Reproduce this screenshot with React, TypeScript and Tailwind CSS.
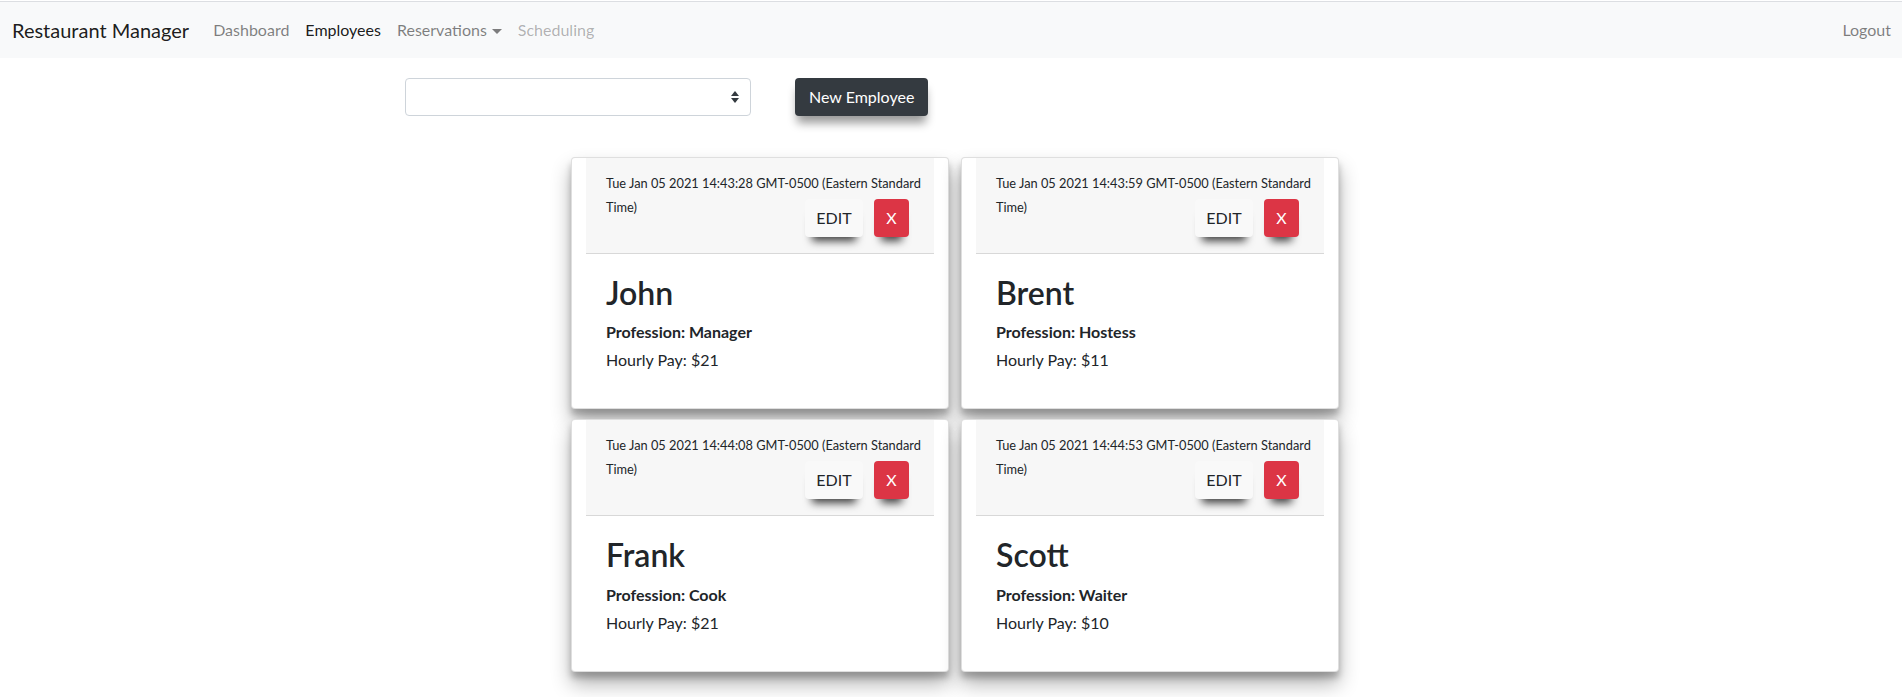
import React from "react";

// ---------- Data ----------
type Employee = {
  created: string;
  name: string;
  profession: string;
  pay: number;
};

const EMPLOYEES: Employee[] = [
  { created: "Tue Jan 05 2021 14:43:28 GMT-0500", name: "John", profession: "Manager", pay: 21 },
  { created: "Tue Jan 05 2021 14:43:59 GMT-0500", name: "Brent", profession: "Hostess", pay: 11 },
  { created: "Tue Jan 05 2021 14:44:08 GMT-0500", name: "Frank", profession: "Cook", pay: 21 },
  { created: "Tue Jan 05 2021 14:44:53 GMT-0500", name: "Scott", profession: "Waiter", pay: 10 },
];

const FONT = "font-['Segoe_UI',Lato,'Liberation_Sans',sans-serif]";

// ---------- UI ----------
export default function App() {
  return (
    <div className={`min-h-screen w-full bg-white text-[#212529] ${FONT}`}>
      <Navbar />

      {/* toolbar */}
      <div className="mt-5 flex items-center pl-[405px]">
        <div className="relative h-[38px] w-[346px] rounded-[4px] border border-[#ced4da] bg-white">
          <svg
            className="absolute right-[11px] top-1/2 -translate-y-1/2"
            width="8"
            height="12"
            viewBox="0 0 8 12"
          >
            <path d="M0 5 L4 0 L8 5 Z" fill="#343a40" />
            <path d="M0 7 L4 12 L8 7 Z" fill="#343a40" />
          </svg>
        </div>
        <button className="ml-[44px] h-[38px] rounded-[4px] bg-[#343a40] px-[14px] text-base text-white shadow-[0_9px_10px_-2px_rgba(0,0,0,0.4)]">
          New Employee
        </button>
      </div>

      {/* cards */}
      <div className="mt-[41px] grid grid-cols-[378px_378px] justify-center gap-x-3 gap-y-[10px] pl-2">
        {EMPLOYEES.map((e) => (
          <EmployeeCard key={e.name} emp={e} />
        ))}
      </div>
    </div>
  );
}

function Navbar() {
  return (
    <nav className="mt-px flex h-[57px] items-center border-t border-[#dcdee2] bg-[#f8f9fa] pl-3 pr-[11px]">
      <span className="mr-4 text-[20px] text-black/90">Restaurant Manager</span>
      <a className="px-2 text-base text-black/50">Dashboard</a>
      <a className="px-2 text-base text-black/90">Employees</a>
      <a className="flex items-center px-2 text-base text-black/50">
        Reservations
        <span className="ml-[5px] mt-[2px] inline-block border-x-[5px] border-t-[5px] border-x-transparent border-t-black/50" />
      </a>
      <a className="px-2 text-base text-black/30">Scheduling</a>
      <a className="ml-auto text-base text-black/50">Logout</a>
    </nav>
  );
}

function EmployeeCard({ emp }: { emp: Employee }) {
  return (
    <div className="rounded-[4px] border border-black/[0.125] bg-white px-[14px] shadow-[0_12px_20px_rgba(0,0,0,0.3),0_6px_6px_rgba(0,0,0,0.22)]">
      {/* header */}
      <div className="border-b border-black/[0.125] bg-[#f7f7f7] pb-4 pl-5 pr-[25px] pt-[13px]">
        <div className="text-[12.8px] leading-6">
          <div className="whitespace-nowrap">{emp.created} (Eastern Standard</div>
          <div>Time)</div>
        </div>
        <div className="-mt-5 flex justify-end gap-[11px]">
          <button className="h-[38px] w-[58px] rounded-[4px] bg-[#f9f9f9] text-base text-[#212529] shadow-[0_11px_8px_-7px_rgba(0,0,0,0.75)]">
            EDIT
          </button>
          <button className="h-[38px] w-[35px] rounded-[4px] bg-[#dc3545] text-base text-white shadow-[0_11px_8px_-7px_rgba(0,0,0,0.75)]">
            X
          </button>
        </div>
      </div>

      {/* body */}
      <div className="p-5">
        <h2 className="mb-2 text-[32px] font-semibold leading-[1.2]">{emp.name}</h2>
        <p className="text-base font-bold leading-6">Profession: {emp.profession}</p>
        <p className="mb-4 mt-1 text-base leading-6">Hourly Pay: ${emp.pay}</p>
      </div>
    </div>
  );
}
